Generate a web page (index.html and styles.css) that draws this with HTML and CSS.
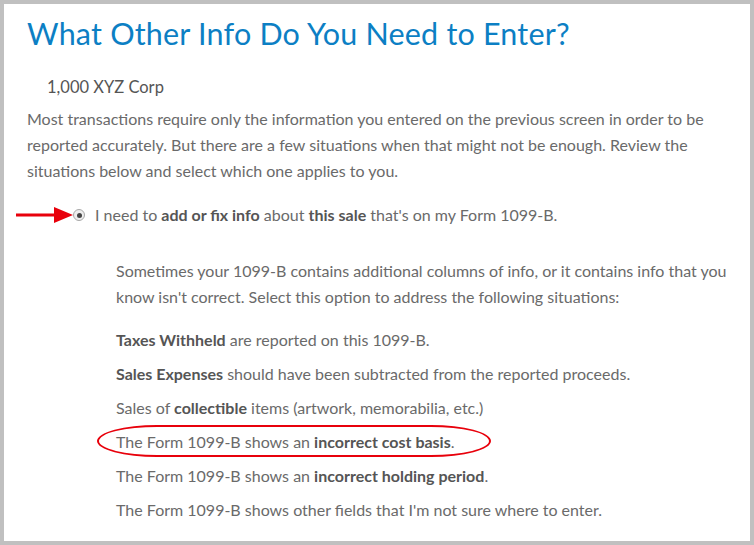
FILE: index.html
```html
<!DOCTYPE html>
<html>
<head>
<meta charset="utf-8">
<link rel="stylesheet" href="styles.css">
</head>
<body>
<div class="frame">
  <h1 class="title">What Other Info Do You Need to Enter?</h1>
  <div class="corp">1,000 XYZ Corp</div>
  <p class="intro">Most transactions require only the information you entered on the previous screen in order to be reported accurately. But there are a few situations when that might not be enough. Review the situations below and select which one applies to you.</p>
  <div class="option">
    <svg class="arrow" width="58" height="16" viewBox="0 0 58 16"><rect x="0" y="6.5" width="40" height="3" fill="#e8000b"/><polygon points="38,0 57,8 38,16" fill="#e8000b"/></svg>
    <span class="radio"><span class="dot"></span></span>
    <span class="label">I need to <b>add or fix info</b> about <b>this sale</b> that's on my Form 1099-B.</span>
  </div>
  <div class="details">
    <p class="sub">Sometimes your 1099-B contains additional columns of info, or it contains info that you know isn't correct. Select this option to address the following situations:</p>
    <ul class="items">
      <li><b>Taxes Withheld</b> are reported on this 1099-B.</li>
      <li><b>Sales Expenses</b> should have been subtracted from the reported proceeds.</li>
      <li>Sales of <b>collectible</b> items (artwork, memorabilia, etc.)</li>
      <li class="circled">The Form 1099-B shows an <b>incorrect cost basis</b>.</li>
      <li>The Form 1099-B shows an <b>incorrect holding period</b>.</li>
      <li>The Form 1099-B shows other fields that I'm not sure where to enter.</li>
    </ul>
  </div>
</div>
</body>
</html>
```

FILE: styles.css
```css
html, body {
  margin: 0;
  padding: 0;
  background: #c0c0c0;
}
.frame {
  box-sizing: border-box;
  width: 746px;
  height: 537px;
  margin: 4px;
  background: #fff;
  padding: 11px 0 0 23px;
  font-family: "Lato", "Open Sans", sans-serif;
  color: #6a6a6a;
  overflow: hidden;
}
.title {
  margin: 0;
  font-weight: 400;
  font-size: 30.5px;
  line-height: 36px;
  color: #0c7fc4;
  letter-spacing: 0.2px;
}
.corp {
  margin: 25px 0 0 20px;
  font-size: 16.5px;
  line-height: 22px;
  color: #555;
}
.intro {
  margin: 8px 0 0 0;
  font-size: 16px;
  line-height: 26px;
  width: 704px;
}
.option {
  position: relative;
  display: flex;
  align-items: center;
  margin: 18px 0 0 0;
  padding-left: 45px;
  font-size: 16px;
  line-height: 26px;
}
.arrow {
  position: absolute;
  left: -11px;
  top: 5px;
}
.radio {
  box-sizing: border-box;
  width: 12px;
  height: 12px;
  border-radius: 50%;
  border: 1px solid #a8a8a8;
  background: #eee;
  display: flex;
  align-items: center;
  justify-content: center;
  margin-left: 1px;
  margin-right: 10px;
}
.dot {
  width: 5px;
  height: 5px;
  border-radius: 50%;
  background: #444;
}
b {
  font-weight: 700;
  color: #555;
}
.details {
  padding-left: 89px;
  margin-top: 30px;
}
.sub {
  margin: 0;
  font-size: 16px;
  line-height: 26px;
  width: 622px;
}
.items {
  list-style: none;
  margin: 17px 0 0 0;
  padding: 0;
  font-size: 16px;
  line-height: 26px;
}
.items li {
  margin-bottom: 8px;
}
.circled {
  position: relative;
}
.circled::before {
  content: "";
  position: absolute;
  left: -19px;
  top: -4px;
  width: 390px;
  height: 28px;
  border: 2px solid #e8000b;
  border-radius: 60px / 50%;
}
```
